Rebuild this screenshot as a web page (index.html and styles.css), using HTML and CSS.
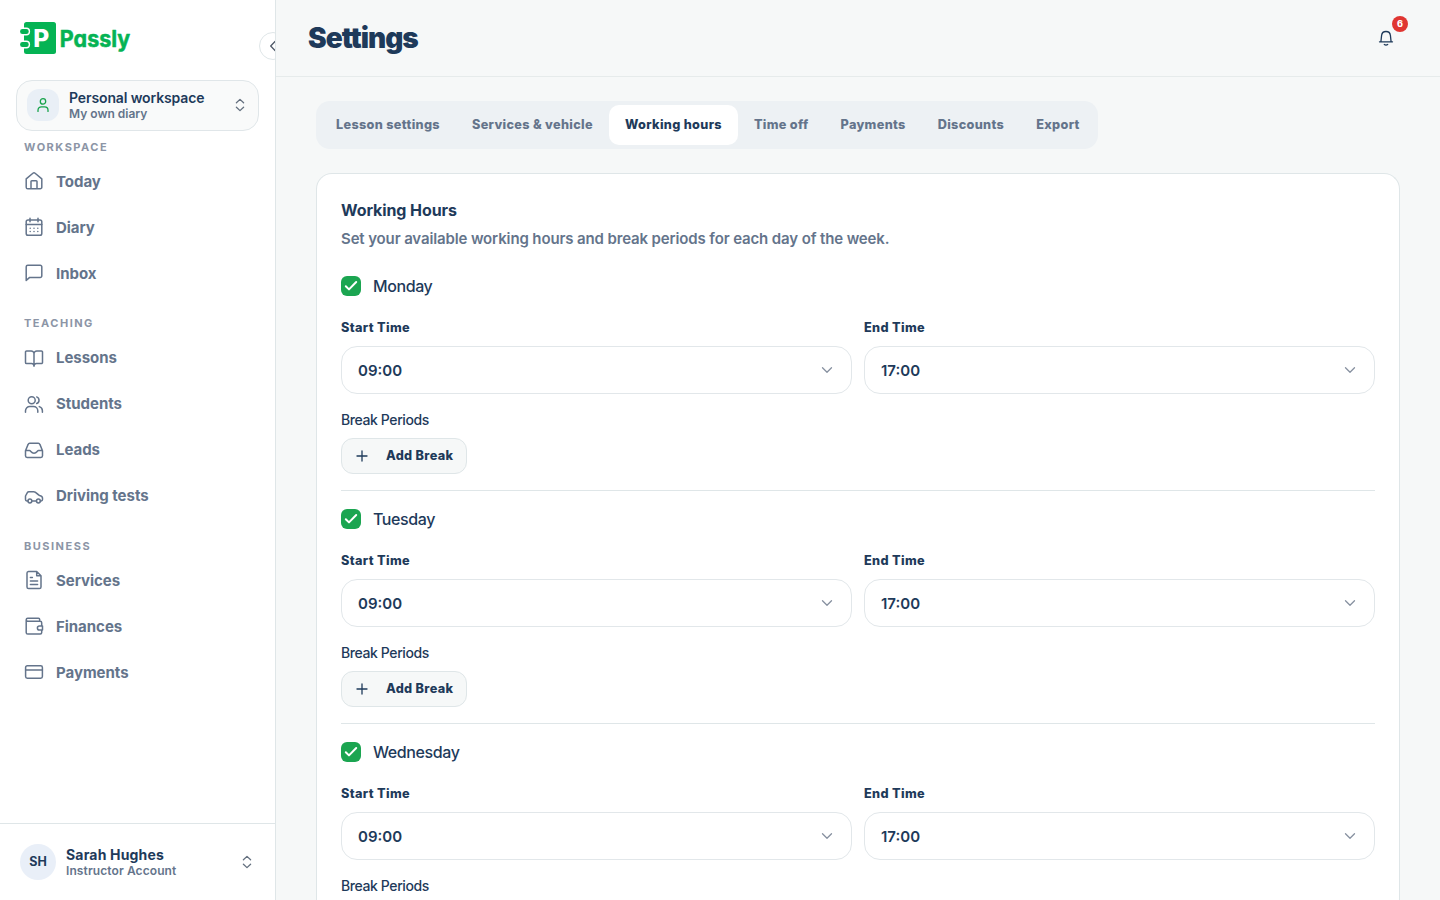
FILE: index.html
```html
<!DOCTYPE html>
<html lang="en">
<head>
<meta charset="utf-8">
<title>Settings – Passly</title>
<link rel="stylesheet" href="styles.css">
</head>
<body>
<svg class="sprite" aria-hidden="true">
  <symbol id="chevrons" viewBox="0 0 16 16"><path d="M4.400 5.800 8 2.400 11.600 5.800M4.400 10.200 8 13.600 11.600 10.200"/></symbol>
  <symbol id="chevron-down" viewBox="0 0 16 16"><path d="M3.500 5.800 8 10.200l4.500-4.400"/></symbol>
  <symbol id="plus" viewBox="0 0 16 16"><path d="M8 3v10M3 8h10"/></symbol>
  <symbol id="tick" viewBox="0 0 20 20"><path d="M4.800 10.200 8 13.400l7.200-7.400"/></symbol>
</svg>
<div class="app">
  <aside class="sidebar">
    <div class="brand">
      <svg class="logo" width="112" height="34" viewBox="0 0 112 34" role="img" aria-label="Passly">
        <rect class="logo-fill" x="4" y="1" width="32" height="32" rx="2.500"/>
        <rect class="logo-ring" x="-.6" y="7.300" width="10" height="6.400" rx="3"/>
        <rect class="logo-ring" x="-.6" y="20.300" width="10" height="6.400" rx="3"/>
        <text class="logo-letter" x="13.300" y="25.800" textLength="16" lengthAdjust="spacingAndGlyphs">P</text>
        <text class="logo-word" x="39.800" y="26.400" textLength="70.500" lengthAdjust="spacingAndGlyphs">Passly</text>
      </svg>
    </div>
    <button class="collapse" aria-label="Collapse"><svg width="16" height="16" viewBox="0 0 16 16"><path d="M10 3.500 5.700 8l4.300 4.500"/></svg></button>
    <div class="workspace">
      <span class="workspace-icon"><svg width="16" height="16" viewBox="0 0 16 16"><circle cx="8" cy="4.400" r="2.700"/><path d="M3 14.400v-1.200A3.400 3.400 0 0 1 6.400 9.800h3.200A3.400 3.400 0 0 1 13 13.200v1.200"/></svg></span>
      <span class="workspace-text"><b>Personal workspace</b><small>My own diary</small></span>
      <svg class="chevrons" width="16" height="16"><use href="#chevrons"/></svg>
    </div>
    <nav class="nav">
      <section>
        <h2>WORKSPACE</h2>
        <a><svg viewBox="0 0 20 20"><path d="M2.200 7.900 8.900 2.200a1.700 1.700 0 0 1 2.200 0l6.700 5.700v8.300a1.600 1.600 0 0 1-1.600 1.600H3.800a1.600 1.600 0 0 1-1.600-1.600zM7 17.800v-7.300a.8.8 0 0 1 .8-.8h4.400a.8.8 0 0 1 .8.8v7.300"/></svg>Today</a>
        <a><svg viewBox="0 0 20 20"><rect x="2.200" y="3" width="15.600" height="15.200" rx="1.800"/><path d="M2.200 7.400h15.600M6 1.200v3.600M14 1.200v3.600"/><path class="dots" d="M6.200 11.300h.01M10 11.300h.01M13.800 11.300h.01M6.200 14.500h.01M10 14.500h.01M13.800 14.500h.01"/></svg>Diary</a>
        <a><svg viewBox="0 0 20 20"><path d="M2.200 17.400V3.800a1.600 1.600 0 0 1 1.600-1.600h12.400a1.600 1.600 0 0 1 1.600 1.600v9a1.600 1.600 0 0 1-1.600 1.600H5.700z"/></svg>Inbox</a>
      </section>
      <section>
        <h2>TEACHING</h2>
        <a><svg viewBox="0 0 20 20"><path d="M10 18.300V5.800A2.800 2.800 0 0 0 7.200 3H2.600a1.100 1.100 0 0 0-1.100 1.100v10.400a1.100 1.100 0 0 0 1.100 1.100h4.900A2.500 2.500 0 0 1 10 18a2.500 2.500 0 0 1 2.500-2.400h4.900a1.100 1.100 0 0 0 1.100-1.100V4.100A1.100 1.100 0 0 0 17.400 3h-4.600A2.800 2.800 0 0 0 10 5.800"/></svg>Lessons</a>
        <a><svg viewBox="0 0 20 20"><circle cx="7.700" cy="6.200" r="3.500"/><path d="M1.500 18.200v-1.500a4.300 4.300 0 0 1 4.300-4.300h3.700a4.300 4.300 0 0 1 4.300 4.300v1.500M12.700 2.900a3.500 3.500 0 0 1 0 6.600M15.300 12.600a4.300 4.300 0 0 1 3.100 4.100v1.500"/></svg>Students</a>
        <a><svg viewBox="0 0 20 20"><path d="M1.500 10.700v5.100a1.600 1.600 0 0 0 1.600 1.600h13.800a1.600 1.600 0 0 0 1.600-1.600v-5.100L15.900 4.400a1.700 1.700 0 0 0-1.600-1.100H5.700a1.700 1.700 0 0 0-1.600 1.100zM1.800 10.500h3.700c1.300 0 1.600 2.700 4.500 2.700s3.200-2.700 4.500-2.700h3.700"/></svg>Leads</a>
        <a><svg viewBox="0 0 20 20"><path d="M3.900 14.900H2.800a1.300 1.300 0 0 1-1.300-1.300V10l1.700-3.200a2 2 0 0 1 1.800-1h4.800c2.600 0 3.500 3 5.800 3.600 2 .4 2.900 1.200 2.900 2.700v1.500a1.300 1.300 0 0 1-1.300 1.300h-.8M7.900 14.900h4.500"/><circle cx="5.900" cy="15" r="1.900"/><circle cx="14.400" cy="15" r="1.900"/></svg>Driving tests</a>
      </section>
      <section>
        <h2>BUSINESS</h2>
        <a><svg viewBox="0 0 20 20"><path d="M4.500 1.500h8.200L17 5.800v11.100a1.600 1.600 0 0 1-1.600 1.600H4.600A1.600 1.600 0 0 1 3 16.900V3.100a1.600 1.600 0 0 1 1.500-1.600zM12.700 1.700v4.100h4.100M6.400 7.500h2M6.400 11h7.200M6.400 14.500h7.200"/></svg>Services</a>
        <a><svg viewBox="0 0 20 20"><path d="M15.700 5.300V3.500a1.200 1.200 0 0 0-1.200-1.200H3.700a1.500 1.500 0 0 0 0 3h12.500a1.500 1.500 0 0 1 1.500 1.500v2.700M17.700 14.500v2a1.500 1.500 0 0 1-1.500 1.500H3.800a1.600 1.600 0 0 1-1.600-1.600V3.800M18.500 9.900h-3a2.100 2.100 0 0 0 0 4.200h3z"/></svg>Finances</a>
        <a><svg viewBox="0 0 20 20"><rect x="1.600" y="3.700" width="16.800" height="12.600" rx="1.700"/><path d="M1.600 7.900h16.800"/></svg>Payments</a>
      </section>
    </nav>
    <div class="account">
      <span class="avatar">SH</span>
      <span class="account-text"><b>Sarah Hughes</b><small>Instructor Account</small></span>
      <svg class="chevrons" width="16" height="16"><use href="#chevrons"/></svg>
    </div>
  </aside>
  <main class="main">
    <header class="topbar">
      <h1>Settings</h1>
      <div class="bell">
        <svg width="16" height="16" viewBox="0 0 16 16"><path d="M1.500 11.800h13M2.900 11.800 3.600 5.400a4.430 4.430 0 0 1 8.800 0l.7 6.400M6.300 14.500q1.700 1.200 3.400 0"/></svg>
        <span class="badge">6</span>
      </div>
    </header>
    <div class="content">
      <div class="tabs">
        <a>Lesson settings</a><a>Services &amp; vehicle</a><a class="active">Working hours</a><a>Time off</a><a>Payments</a><a>Discounts</a><a>Export</a>
      </div>
      <div class="card">
        <h3>Working Hours</h3>
        <p class="lead">Set your available working hours and break periods for each day of the week.</p>
        <div class="day">
          <div class="day-name"><span class="check"><svg width="20" height="20"><use href="#tick"/></svg></span>Monday</div>
          <div class="times">
            <div class="field"><label>Start Time</label><div class="select">09:00<svg width="16" height="16"><use href="#chevron-down"/></svg></div></div>
            <div class="field"><label>End Time</label><div class="select">17:00<svg width="16" height="16"><use href="#chevron-down"/></svg></div></div>
          </div>
          <div class="breaks">Break Periods</div>
          <button class="add"><svg width="16" height="16"><use href="#plus"/></svg>Add Break</button>
        </div>
        <div class="day">
          <div class="day-name"><span class="check"><svg width="20" height="20"><use href="#tick"/></svg></span>Tuesday</div>
          <div class="times">
            <div class="field"><label>Start Time</label><div class="select">09:00<svg width="16" height="16"><use href="#chevron-down"/></svg></div></div>
            <div class="field"><label>End Time</label><div class="select">17:00<svg width="16" height="16"><use href="#chevron-down"/></svg></div></div>
          </div>
          <div class="breaks">Break Periods</div>
          <button class="add"><svg width="16" height="16"><use href="#plus"/></svg>Add Break</button>
        </div>
        <div class="day last">
          <div class="day-name"><span class="check"><svg width="20" height="20"><use href="#tick"/></svg></span>Wednesday</div>
          <div class="times">
            <div class="field"><label>Start Time</label><div class="select">09:00<svg width="16" height="16"><use href="#chevron-down"/></svg></div></div>
            <div class="field"><label>End Time</label><div class="select">17:00<svg width="16" height="16"><use href="#chevron-down"/></svg></div></div>
          </div>
          <div class="breaks">Break Periods</div>
        </div>
      </div>
    </div>
  </main>
</div>
</body>
</html>
```
FILE: styles.css
```css
* { box-sizing: border-box; }
body {
  margin: 0;
  height: 900px;
  overflow: hidden;
  font-family: Inter, "Liberation Sans", sans-serif;
  color: #1e3a5a;
  background: #f6f8f8;
}
h1, h2, h3, p { margin: 0; }
button { font: inherit; color: inherit; }
svg { display: block; flex: none; fill: none; stroke: currentColor; stroke-width: 1.3; stroke-linecap: round; stroke-linejoin: round; }
.sprite { position: absolute; width: 0; height: 0; }
.app { display: flex; height: 900px; }

.sidebar {
  position: relative;
  flex: none;
  display: flex;
  flex-direction: column;
  width: 276px;
  background: #fff;
  border-right: 1px solid #dfe6e8;
  overflow: hidden;
}
.brand { height: 80px; padding: 21px 0 0 20px; }
.logo { stroke: none; }
.logo-fill { fill: #05b354; }
.logo-ring { fill: #05b354; stroke: #fff; stroke-width: 1.4; }
.logo-letter { fill: #fff; font: 800 24px Inter, sans-serif; }
.logo-word { fill: #05b354; font: 700 22.5px Inter, sans-serif; font-feature-settings: "cv11"; stroke: #05b354; stroke-width: .5; }
.collapse {
  position: absolute;
  left: 259px;
  top: 32px;
  width: 28px;
  height: 28px;
  padding: 0 0 0 5px;
  border: 1px solid #dfe6e8;
  border-radius: 50%;
  background: #fff;
  color: #4f5968;
}
.workspace {
  display: flex;
  align-items: center;
  flex: none;
  width: 243px;
  height: 51px;
  margin-left: 16px;
  padding: 0 10px 1px;
  border: 1px solid #e0e6e9;
  border-radius: 16px;
  background: #f9fafa;
}
.workspace-icon {
  display: grid;
  place-items: center;
  width: 32px;
  height: 32px;
  border-radius: 12px;
  background: #e9eff6;
  color: #16a34a;
}
.workspace-text, .account-text { display: flex; flex-direction: column; flex: 1; margin-left: 10px; }
.workspace-text { padding-top: 1px; }
.workspace-text b { font-size: 14px; font-weight: 600; line-height: 17px; letter-spacing: -.12px; }
.workspace-text small, .account-text small { font-size: 12px; font-weight: 600; line-height: 16px; color: #64748b; }
.account-text small { line-height: 15px; letter-spacing: .1px; }
.chevrons { color: #64707f; }

.nav { flex: 1; display: flex; flex-direction: column; gap: 16px; padding: 4.75px 24px 0; }
.nav h2 { height: 22.5px; font-size: 11px; font-weight: 700; line-height: 22.5px; letter-spacing: 1.5px; color: #8c95a6; }
.nav a { display: flex; align-items: center; gap: 12px; height: 46px; font-size: 15px; font-weight: 670; letter-spacing: -.03px; color: #64748b; }
.nav svg { width: 20px; height: 20px; stroke-width: 1.5; }

.account { display: flex; align-items: center; flex: none; height: 77px; padding: 0 20px; border-top: 1px solid #dfe6e8; }
.avatar { display: grid; place-items: center; width: 36px; height: 36px; padding-bottom: 1px; border-radius: 50%; background: #e9eff8; font-size: 12.5px; font-weight: 700; }
.account-text b { font-size: 14px; font-weight: 700; line-height: 17px; letter-spacing: .18px; }

.main { flex: 1; display: flex; flex-direction: column; min-width: 0; height: 900px; overflow: hidden; }
.topbar { display: flex; align-items: center; justify-content: space-between; flex: none; height: 77px; padding: 0 46px 0 32px; border-bottom: 1px solid #e6ebeb; }
.topbar h1 { font-size: 28px; font-weight: 900; line-height: 36px; letter-spacing: -1px; }
.bell { position: relative; }
.badge {
  position: absolute;
  left: 14px;
  top: -14px;
  width: 16px;
  height: 16px;
  border-radius: 50%;
  background: #e03632;
  color: #fff;
  font-size: 9px;
  font-weight: 800;
  line-height: 16px;
  text-align: center;
}
.content { flex: 1; display: flex; flex-direction: column; min-height: 0; padding: 24px 40px 0; }
.tabs { display: flex; flex: none; width: 782px; height: 48px; padding: 4px; border-radius: 14px; background: #edf1f4; }
.tabs a { display: flex; align-items: center; height: 40px; padding: 0 16px 1px; border-radius: 10px; font-size: 12.7px; font-weight: 780; letter-spacing: .32px; white-space: nowrap; color: #64748b; }
.tabs .active { background: #fff; color: #1e3a5a; }

.card { flex: 1; min-height: 0; margin-top: 24px; padding: 24px 24px 0; border: 1px solid #dfe6e8; border-bottom: 0; border-radius: 16px 16px 0 0; background: #fff; }
.card h3 { font-size: 16px; font-weight: 700; line-height: 24px; letter-spacing: -.1px; }
.lead { margin-top: 5px; font-size: 15px; font-weight: 600; line-height: 24px; letter-spacing: -.13px; color: #64748b; }
.day { height: 233px; padding-top: 16px; border-bottom: 1px solid #dfe6e8; }
.lead + .day { height: 240px; padding-top: 23px; }
.day.last { height: auto; border-bottom: 0; }
.day-name { display: flex; align-items: center; gap: 12px; height: 24px; font-size: 16px; font-weight: 450; letter-spacing: -.4px; }
.check { width: 20px; height: 20px; border-radius: 6px; background: #1ba551; color: #fff; }
.check svg { stroke-width: 2; }
.times { display: grid; grid-template-columns: 1fr 1fr; gap: 12px; margin-top: 20px; }
.field label { display: block; font-size: 12.7px; font-weight: 780; line-height: 20px; letter-spacing: .35px; }
.select { display: flex; align-items: center; justify-content: space-between; height: 48px; margin-top: 8px; padding: 0 16px; border: 1px solid #e2e7ea; border-radius: 16px; font-size: 15px; font-weight: 600; }
.select svg { color: #8791a0; }
.breaks { margin-top: 16px; font-size: 14px; font-weight: 450; line-height: 20px; letter-spacing: -.4px; }
.add { display: flex; align-items: center; gap: 16px; width: 126px; height: 36px; margin-top: 8px; padding: 0 12px 1px; border: 1px solid #dfe6e8; border-radius: 12px; background: #f6f8f8; font-size: 12.7px; font-weight: 780; letter-spacing: .32px; white-space: nowrap; }
```
